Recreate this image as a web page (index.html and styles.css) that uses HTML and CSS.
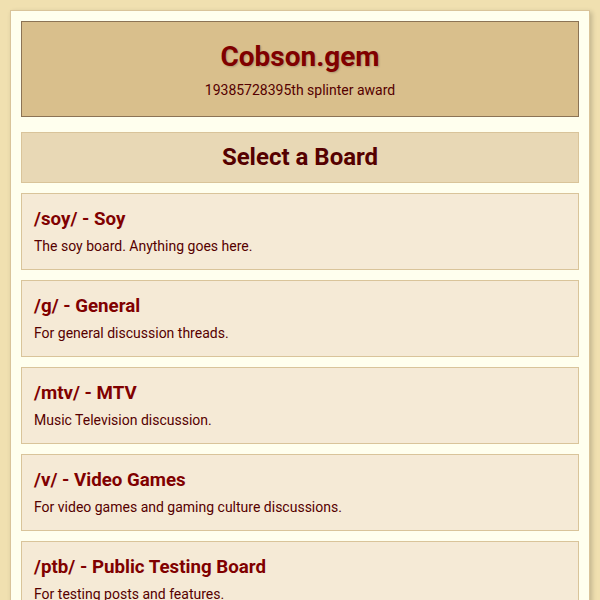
FILE: index.html
```html
<!DOCTYPE html>
<html lang="en">
<head>
<meta charset="utf-8">
<meta name="viewport" content="width=device-width, initial-scale=1">
<title>Cobson.gem</title>
<link rel="stylesheet" href="styles.css">
</head>
<body>
<div class="container">
  <header class="site-header">
    <h1>Cobson.gem</h1>
    <p>19385728395th splinter award</p>
  </header>
  <main>
    <h2 class="section-title">Select a Board</h2>
    <ul class="board-list">
      <li class="board"><h3><a href="#soy">/soy/ - Soy</a></h3><p>The soy board. Anything goes here.</p></li>
      <li class="board"><h3><a href="#g">/g/ - General</a></h3><p>For general discussion threads.</p></li>
      <li class="board"><h3><a href="#mtv">/mtv/ - MTV</a></h3><p>Music Television discussion.</p></li>
      <li class="board"><h3><a href="#v">/v/ - Video Games</a></h3><p>For video games and gaming culture discussions.</p></li>
      <li class="board"><h3><a href="#ptb">/ptb/ - Public Testing Board</a></h3><p>For testing posts and features.</p></li>
    </ul>
  </main>
</div>
</body>
</html>
```
FILE: styles.css
```css
* {
  box-sizing: border-box;
  margin: 0;
  padding: 0;
}

body {
  padding: 10px;
  background: #f0e0b0;
  color: #550000;
  font-family: Roboto, sans-serif;
}

p {
  font-size: 14px;
  line-height: 22px;
}

.container {
  max-width: 1200px;
  margin: 0 auto;
  padding: 10px;
  border: 1px solid #d9c49a;
  background: #ffffee;
  box-shadow: 2px 2px 5px rgba(0, 0, 0, 0.2);
}

.site-header {
  margin-bottom: 15px;
  padding: 15px;
  border: 1px solid #8b7355;
  background: #d9bf8c;
  text-align: center;
}

.site-header h1 {
  margin-bottom: 2px;
  color: #800000;
  font-size: 28px;
  line-height: 40px;
  text-shadow: 1px 1px 2px rgba(0, 0, 0, 0.2);
}

.section-title {
  margin-bottom: 10px;
  padding: 7px;
  border: 1px solid #d9c49a;
  background: #e8d8b5;
  line-height: 35px;
  text-align: center;
}

.board-list {
  list-style: none;
}

.board {
  margin-bottom: 10px;
  padding: 12px;
  border: 1px solid #d9c49a;
  background: #f5ead6;
}

.board h3 {
  margin-bottom: 3px;
  line-height: 26px;
}

.board a {
  color: #800000;
  text-decoration: none;
}
```
